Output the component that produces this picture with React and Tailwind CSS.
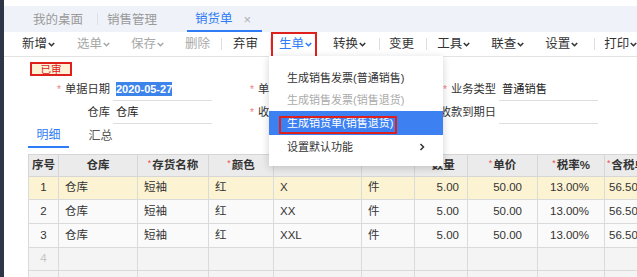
import React from 'react';

const FONT = "font-['Liberation_Sans','Noto_Sans_CJK_SC',sans-serif]";

const TOOLS = [
  { label: '新增', arrow: true, tone: 'text-[#333]', ml: 'ml-[18px]' },
  { label: '选单', arrow: true, tone: 'text-[#a8a8a8]', ml: 'ml-[22px]' },
  { label: '保存', arrow: true, tone: 'text-[#a8a8a8]', ml: 'ml-[21px]' },
  { label: '删除', tone: 'text-[#a8a8a8]', ml: 'ml-[21px]' },
  { sep: true, ml: 'ml-[11px]' },
  { label: '弃审', tone: 'text-[#333]', ml: 'ml-[11px]' },
  { sep: true, ml: 'ml-[12px]' },
  { label: '生单', arrow: true, tone: 'text-[#2f7df6]', ml: 'ml-[8px]', boxed: true },
  { label: '转换', arrow: true, tone: 'text-[#333]', ml: 'ml-[21px]' },
  { sep: true, ml: 'ml-[13px]' },
  { label: '变更', tone: 'text-[#333]', ml: 'ml-[9px]' },
  { sep: true, ml: 'ml-[12px]' },
  { label: '工具', arrow: true, tone: 'text-[#333]', ml: 'ml-[10px]' },
  { label: '联查', arrow: true, tone: 'text-[#333]', ml: 'ml-[21px]' },
  { label: '设置', arrow: true, tone: 'text-[#333]', ml: 'ml-[21px]' },
  { sep: true, ml: 'ml-[16px]' },
  { label: '打印', arrow: true, tone: 'text-[#333]', ml: 'ml-[9px]' },
];

// columns 5 and 6 sit under the open menu, their titles are hidden in the shot
const COLS = [
  { w: 'w-[30px]', title: '序号', cell: 'justify-center' },
  { w: 'w-[79px]', title: '仓库', cell: 'pl-[6px]' },
  { w: 'w-[71px]', title: '存货名称', req: true, cell: 'pl-[6px]' },
  { w: 'w-[65px]', title: '颜色', req: true, cell: 'pl-[6px]' },
  { w: 'w-[88px]', title: '', cell: 'pl-[6px]' },
  { w: 'w-[53px]', title: '', cell: 'pl-[6px]' },
  { w: 'w-[53px]', title: '数量', req: true, cell: 'justify-end pr-[8px]' },
  { w: 'w-[70px]', title: '单价', req: true, cell: 'justify-end pr-[15px]' },
  { w: 'w-[67px]', title: '税率%', req: true, cell: 'justify-end pr-[15px]' },
  { w: 'w-[80px]', title: '含税单价', req: true, cell: 'pl-[4px]', head: 'justify-start pl-[2px]' },
];

const ROWS = [
  { bg: 'bg-[#fcf3d3]', h: 'h-[23px]', cells: ['1', '仓库', '短袖', '红', 'X', '件', '5.00', '50.00', '13.00%', '56.50'] },
  { bg: 'bg-[#fafafa]', h: 'h-[24px]', cells: ['2', '仓库', '短袖', '红', 'XX', '件', '5.00', '50.00', '13.00%', '56.50'] },
  { bg: 'bg-[#fafafa]', h: 'h-[24px]', cells: ['3', '仓库', '短袖', '红', 'XXL', '件', '5.00', '50.00', '13.00%', '56.50'] },
  { bg: 'bg-[#f4f4f4]', h: 'h-[23px]', cells: ['4', '', '', '', '', '', '', '', '', ''], faint: true },
  { bg: 'bg-[#f4f4f4]', h: 'h-[23px]', cells: ['', '', '', '', '', '', '', '', '', ''] },
];

function Chevron({ className = '' }) {
  return (
    <svg width="7" height="5" viewBox="0 0 7 5" className={className}>
      <path d="M0.8 1l2.7 2.7 2.7-2.7" fill="none" stroke="currentColor" strokeWidth="1.6" />
    </svg>
  );
}

function Field({ label, req, children, line = true }) {
  return (
    <div className="flex shrink-0 h-full">
      <div className="w-[91px] flex items-center justify-end text-[11.25px] text-[#333]">
        {req && <span className="text-[#f37b7b] mr-[4px] text-[10px]">*</span>}
        {label}
      </div>
      <div className={`ml-[3px] w-[99px] flex items-center pl-[3px] text-[11.25px] text-[#222] ${line ? 'border-b border-[#dedede]' : ''}`}>
        {children}
      </div>
    </div>
  );
}

export default function App() {
  return (
    <div className={`w-[637px] h-[277px] overflow-hidden bg-white flex ${FONT}`}>
      <div className="w-[4px] shrink-0 bg-[#2d3646]" />
      <div className="flex-1 min-w-0 flex flex-col">
        {/* tab bar */}
        <div className="mt-[6px] h-[26px] bg-[#eff2f8] flex items-stretch text-[12.5px] shrink-0">
          <div className="ml-[29px] flex items-center pt-[2px] text-[#9a9a9a]">我的桌面</div>
          <div className="ml-[14px] self-center w-px h-[12px] bg-[#dcdfe6]" />
          <div className="ml-[9px] flex items-center pt-[2px] text-[#9a9a9a]">销售管理</div>
          <div className="ml-[30px] w-[75px] flex items-center pt-[2px] pl-[8px] border-b-2 border-[#2f7df6]">
            <span className="text-[#2f7df6]">销货单</span>
            <span className="ml-[11px] text-[#b0b0b0] text-[13px] leading-none">×</span>
          </div>
        </div>

        {/* toolbar */}
        <div className="h-[25px] shrink-0 flex items-center border-b border-[#e3e3e3] text-[12.5px] whitespace-nowrap">
          {TOOLS.map((t, i) =>
            t.sep ? (
              <div key={i} className={`${t.ml} w-px h-[12px] bg-[#dedede] shrink-0`} />
            ) : (
              <div key={i} className={`${t.ml} ${t.tone} relative h-full flex items-center shrink-0`}>
                <span>{t.label}</span>
                {t.arrow && <Chevron className="ml-[1px] mt-[1px]" />}
                {t.boxed && (
                  <span className="absolute -left-[8px] top-0 w-[46px] h-[26px] border-2 border-[#e0201c]" />
                )}
              </div>
            )
          )}
        </div>

        {/* body */}
        <div className="relative flex-1 min-h-0">
          <div className="pt-[5px]">
            <div className="ml-[26px] w-[42px] h-[14px] border-2 border-[#e0201c] bg-[#fdf1d6] flex items-center justify-center text-[10.5px] text-[#e0201c] leading-none">
              已审
            </div>

            <div className="mt-[2px] pl-[15px]">
              <div className="h-[23px] flex whitespace-nowrap">
                <Field label="单据日期" req>
                  <span className="bg-[#3d84ea] text-white font-bold text-[11px] h-[14px] flex items-center">2020-05-27</span>
                </Field>
                <Field label="单据编号" req />
                <Field label="业务类型" req>普通销售</Field>
                <div className="shrink-0 flex items-center pl-[40px] text-[10px] text-[#f3c27b]">*</div>
              </div>
              <div className="h-[23px] flex whitespace-nowrap">
                <Field label="仓库">仓库</Field>
                <Field label="收款方式" req />
                <Field label="收款到期日" />
              </div>
            </div>

            {/* sub tabs */}
            <div className="h-[24px] flex text-[12px]">
              <div className="ml-[24px] w-[41px] flex items-center justify-center border-b-2 border-[#2f7df6] text-[#2f7df6]">明细</div>
              <div className="ml-[11px] w-[41px] flex items-center justify-center text-[#555]">汇总</div>
            </div>

            {/* grid */}
            <div className="mt-[6px] ml-[24px] flex flex-col w-max">
              <div className="h-[23px] flex bg-[#ebebeb] border-y border-[#d6d6d6]">
                {COLS.map((c, i) => (
                  <div
                    key={i}
                    className={`${c.w} shrink-0 flex items-center ${c.head || 'justify-center'} border-l border-[#d6d6d6] text-[11.5px] font-bold text-[#333] whitespace-nowrap overflow-hidden`}
                  >
                    {c.req && <span className="text-[#f05050] text-[9px] font-normal mr-[1px] -mt-[4px]">*</span>}
                    {c.title}
                  </div>
                ))}
              </div>
              {ROWS.map((r, ri) => (
                <div key={ri} className={`${r.h} flex ${r.bg} border-b border-[#dadada]`}>
                  {r.cells.map((v, ci) => (
                    <div
                      key={ci}
                      className={`${COLS[ci].w} shrink-0 flex items-center ${COLS[ci].cell} border-l border-[#dadada] text-[11.5px] whitespace-nowrap ${r.faint ? 'text-[#c4c4c4]' : 'text-[#333]'}`}
                    >
                      {v}
                    </div>
                  ))}
                </div>
              ))}
            </div>
          </div>

          {/* dropdown menu */}
          <div className="absolute left-[265px] -top-px w-[174px] bg-white shadow-[0_2px_8px_rgba(0,0,0,0.18)] pt-[11px] pb-[7px] text-[11px] whitespace-nowrap">
            <div className="h-[22px] flex items-center pl-[18px] text-[#333]">生成销售发票(普通销售)</div>
            <div className="h-[22px] flex items-center pl-[18px] text-[#aaa]">生成销售发票(销售退货)</div>
            <div className="relative h-[24px] flex items-center pl-[18px] bg-[#3d80f2] text-white">
              生成销货单(销售退货)
              <span className="absolute left-[10px] top-[5px] w-[118px] h-[18px] border-2 border-[#e0201c]" />
            </div>
            <div className="h-[24px] flex items-center justify-between pl-[18px] pr-[18px] text-[#333]">
              <span>设置默认功能</span>
              <svg width="6" height="8" viewBox="0 0 6 8">
                <path d="M1.5 1l3 3-3 3" fill="none" stroke="#333" strokeWidth="1.5" />
              </svg>
            </div>
          </div>
        </div>
      </div>
    </div>
  );
}
